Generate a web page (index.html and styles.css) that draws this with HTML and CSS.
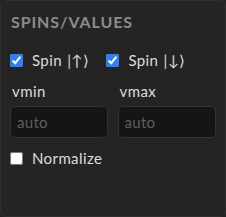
FILE: index.html
```html
<!DOCTYPE html>
<html lang="en">
<head>
    <title>Spins/Values</title>
    <link rel="stylesheet" href="styles.css">
</head>
<body>
    <div class="panel">
        <h2 class="title">SPINS/VALUES</h2>

        <div class="spins">
            <label class="check"><input type="checkbox" checked> Spin |↑⟩</label>
            <label class="check"><input type="checkbox" checked> Spin |↓⟩</label>
        </div>

        <div class="range">
            <div class="field">
                <span class="field-label">vmin</span>
                <input type="text" placeholder="auto">
            </div>
            <div class="field">
                <span class="field-label">vmax</span>
                <input type="text" placeholder="auto">
            </div>
        </div>

        <label class="check"><input type="checkbox" class="plain"> Normalize</label>
    </div>
</body>
</html>
```

FILE: styles.css
```css
* {
    margin: 0;
    padding: 0;
    box-sizing: border-box;
    font-family: Lato, "Noto Sans", sans-serif;
}

body {
    background-color: #242424;
    width: 226px;
    height: 217px;
}

.panel {
    height: 217px;
    background-color: #242424;
    border: 1px solid #2f2f2f;
    border-radius: 6px;
    padding: 12px 9px;
    color: #dcdcdc;
}

.title {
    font-size: 16px;
    font-weight: 700;
    letter-spacing: 0.9px;
    color: #8c8c8c;
    line-height: 18px;
    margin-bottom: 19px;
    padding-left: 1px;
}

.spins {
    display: flex;
    gap: 17px;
    margin-bottom: 11px;
}

.check {
    display: flex;
    align-items: center;
    gap: 9px;
    font-size: 15px;
    line-height: 20px;
    letter-spacing: 0.4px;
    word-spacing: 1px;
    color: #dcdcdc;
}

.check input {
    width: 13px;
    height: 13px;
    margin: 0;
    accent-color: #2d7ff9;
}

.range {
    display: flex;
    gap: 9px;
    margin-bottom: 10px;
}

.field {
    flex: 1;
    display: flex;
    flex-direction: column;
    gap: 5px;
}

.field-label {
    font-size: 15px;
    line-height: 20px;
    letter-spacing: 0.4px;
    padding-left: 2px;
    color: #dcdcdc;
}

.field input {
    width: 98px;
    height: 32px;
    background-color: #151515;
    border: 1px solid #333;
    border-radius: 5px;
    padding: 0 6px;
    font-size: 15px;
    letter-spacing: 0.3px;
    color: #ddd;
    outline: none;
}

.field input::placeholder {
    color: #5f5f5f;
}
```
